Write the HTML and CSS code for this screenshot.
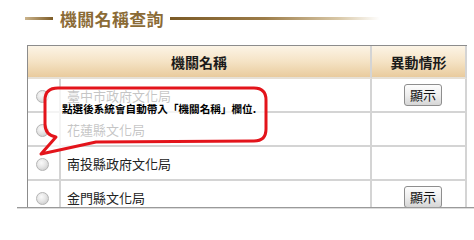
FILE: index.html
```html
<!DOCTYPE html>
<html lang="zh-Hant">
<head>
<meta charset="utf-8">
<title>機關名稱查詢</title>
<link rel="stylesheet" href="styles.css">
</head>
<body>
<div class="page">
  <div class="heading">
    <span class="rule rule-left"></span>
    <h1 class="title">機關名稱查詢</h1>
    <span class="rule rule-right"></span>
  </div>
  <div class="frame">
    <table class="grid">
      <colgroup>
        <col class="c-radio">
        <col class="c-name">
        <col class="c-status">
      </colgroup>
      <thead>
        <tr>
          <th colspan="2" class="h-name">機關名稱</th>
          <th class="h-status">異動情形</th>
        </tr>
      </thead>
      <tbody>
        <tr>
          <td class="cell-radio"><span class="radio"></span></td>
          <td class="cell-name">臺中市政府文化局</td>
          <td class="cell-status"><button class="btn">顯示</button></td>
        </tr>
        <tr>
          <td class="cell-radio"><span class="radio"></span></td>
          <td class="cell-name">花蓮縣文化局</td>
          <td class="cell-status"></td>
        </tr>
        <tr>
          <td class="cell-radio"><span class="radio"></span></td>
          <td class="cell-name">南投縣政府文化局</td>
          <td class="cell-status"></td>
        </tr>
        <tr>
          <td class="cell-radio"><span class="radio"></span></td>
          <td class="cell-name">金門縣文化局</td>
          <td class="cell-status"><button class="btn">顯示</button></td>
        </tr>
      </tbody>
    </table>
  </div>
  <svg class="bubble" width="474" height="219" viewBox="0 0 474 219" aria-hidden="true">
    <path d="M58 88 L254 88 Q266 88 266 100 L266 129 Q266 141 254 141 L96 142 L41 154 L56 137 Q45 135 45 124 L45 100 Q45 88 58 88 Z" fill="#ffffff" fill-opacity="0.74" stroke="#e3141b" stroke-width="3" stroke-linejoin="round"/>
  </svg>
  <div class="bubble-text">點選後系統會自動帶入「機關名稱」欄位.</div>
</div>
</body>
</html>
```
FILE: styles.css
```css
html, body {
  margin: 0;
  padding: 0;
  background: #ffffff;
}

body {
  font-family: "Noto Sans CJK TC", "Noto Sans", sans-serif;
  color: #222222;
}

.page {
  position: relative;
  width: 474px;
  height: 219px;
  overflow: hidden;
}

.heading {
  height: 45px;
  display: flex;
  align-items: flex-start;
  padding-left: 25px;
  box-sizing: border-box;
  padding-top: 9px;
}

.rule {
  display: block;
  height: 3px;
  margin-top: 8px;
}

.rule-left {
  width: 28px;
  background: linear-gradient(to right, #cbb48c, #7d5c27);
}

.rule-right {
  width: 210px;
  background: linear-gradient(to right, #7a5a26 0%, #9c7c48 45%, #d8c7a6 80%, #ffffff 100%);
}

.title {
  margin: 0 6px 0 7px;
  font-size: 17px;
  line-height: 20px;
  font-weight: bold;
  color: #8b6b36;
  letter-spacing: 0.3px;
}

.frame {
  margin-left: 17px;
  height: 162px;
  overflow: hidden;
  border-bottom: 1px solid #9a9a9a;
  box-shadow: 0 1px 0 #dcdcdc;
  padding-left: 10px;
}

.grid {
  table-layout: fixed;
  width: 439px;
  border-collapse: separate;
  border-spacing: 0;
  border-top: 1px solid #8c8c8c;
  border-left: 1px solid #8c8c8c;
}

.c-radio { width: 33px; }
.c-name { width: 311px; }
.c-status { width: 95px; }

.grid th,
.grid td {
  border-right: 2px solid #d4d4d4;
  border-bottom: 2px solid #d4d4d4;
  padding: 0;
}

.grid th {
  height: 31px;
  background: linear-gradient(to bottom, #fcf4e6 0%, #f5e3c5 50%, #e9cb9d 100%);
  font-size: 14px;
  font-weight: bold;
  color: #1a1a1a;
  text-align: center;
  border-bottom-color: #e6e0d6;
}

.grid td {
  height: 32px;
  font-size: 13px;
  vertical-align: middle;
}

.cell-radio {
  text-align: center;
}

.radio {
  display: inline-block;
  width: 11px;
  height: 11px;
  border-radius: 50%;
  border: 1px solid #b4b4b4;
  background: radial-gradient(circle at 40% 35%, #fafafa 0%, #e6e6e6 45%, #c4c4c4 100%);
  vertical-align: middle;
  margin-right: 2px;
}

.cell-name {
  padding-left: 6px !important;
  color: #222222;
}

.cell-status {
  text-align: center;
  padding-left: 9px !important;
}

.btn {
  width: 38px;
  height: 22px;
  padding: 0;
  border: 1px solid #8e8e8e;
  border-radius: 3px;
  background: linear-gradient(to bottom, #fdfdfd 0%, #eeeeee 50%, #d6d6d6 100%);
  font-family: "Noto Sans CJK TC", sans-serif;
  font-size: 13px;
  line-height: 18px;
  color: #111111;
  vertical-align: middle;
}

.bubble {
  position: absolute;
  left: 0;
  top: 0;
  pointer-events: none;
}

.bubble-text {
  position: absolute;
  left: 62px;
  top: 102px;
  font-size: 10.6px;
  line-height: 14px;
  font-weight: bold;
  color: #000000;
  white-space: nowrap;
}
```
